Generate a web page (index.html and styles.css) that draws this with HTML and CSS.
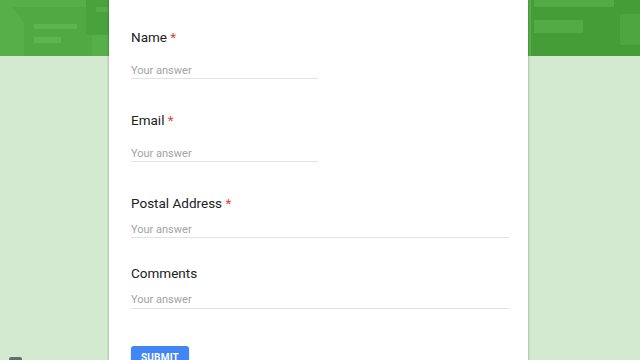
FILE: index.html
```html
<!DOCTYPE html>
<html lang="en">
<head>
	<meta charset="UTF-8">
	<title>Contact form</title>
	<link rel="stylesheet" href="styles.css">
</head>
<body>
	<div class="header">
		<div class="deco deco-slab"></div>
		<div class="deco deco-bar1"></div>
		<div class="deco deco-bar2"></div>
		<div class="deco deco-box"></div>
		<div class="deco deco-bar3"></div>
		<div class="deco deco-right"></div>
		<div class="deco deco-bar4"></div>
		<div class="deco deco-bar5"></div>
		<div class="deco deco-box2"></div>
	</div>
	<div class="card">
		<div class="q">
			<div class="q-title">Name <span class="req">*</span></div>
			<div class="answer short">Your answer</div>
		</div>
		<div class="q">
			<div class="q-title">Email <span class="req">*</span></div>
			<div class="answer short">Your answer</div>
		</div>
		<div class="q q-long">
			<div class="q-title">Postal Address <span class="req">*</span></div>
			<div class="answer">Your answer</div>
		</div>
		<div class="q q-long q-last">
			<div class="q-title">Comments</div>
			<div class="answer tall">Your answer</div>
		</div>
		<div class="actions">
			<span class="submit">SUBMIT</span>
		</div>
	</div>
	<div class="corner"></div>
</body>
</html>
```
FILE: styles.css
```css
*{
	margin: 0;
	padding: 0;
	box-sizing: border-box;
}
html,body{
	height: 100%;
	overflow: hidden;
}
body{
	background-color: #d3ead0;
	font-family: Roboto, "Liberation Sans", sans-serif;
	color: #202124;
}
.header{
	height: 56px;
	background-color: #57af4a;
	position: relative;
	overflow: hidden;
}
.deco{
	position: absolute;
}
.deco-slab{
	left: 12px;
	top: 7px;
	width: 80px;
	height: 49px;
	background-color: #51a944;
	clip-path: polygon(0 0, 100% 0, 100% 100%, 12px 100%, 12px 16px);
}
.deco-bar1{
	left: 34px;
	top: 24px;
	width: 43px;
	height: 5px;
	background-color: #5db450;
}
.deco-bar2{
	left: 34px;
	top: 37px;
	width: 27px;
	height: 6px;
	background-color: #5db450;
}
.deco-box{
	left: 86px;
	top: -4px;
	width: 40px;
	height: 39px;
	border-radius: 3px;
	background-color: #4aa23d;
}
.deco-bar3{
	left: 96px;
	top: 7px;
	width: 20px;
	height: 5px;
	background-color: #55ad48;
}
.deco-right{
	left: 531px;
	top: 0;
	width: 109px;
	height: 56px;
	background-color: #449d37;
}
.deco-bar4{
	left: 534px;
	top: 0;
	width: 80px;
	height: 7px;
	background-color: #53ab46;
}
.deco-bar5{
	left: 534px;
	top: 20px;
	width: 49px;
	height: 13px;
	background-color: #53ab46;
}
.deco-box2{
	left: 620px;
	top: 14px;
	width: 30px;
	height: 31px;
	border-radius: 2px;
	background-color: #4ea641;
}
.card{
	position: relative;
	margin: -56px 0 0 109px;
	width: 419px;
	min-height: 420px;
	background-color: #fff;
	box-shadow: 0 0 2px rgba(0,0,0,.25), 0 1px 3px rgba(0,0,0,.15);
	padding: 27px 19px 0 22px;
}
.q{
	margin-bottom: 31px;
}
.q-title{
	font-size: 13.5px;
	line-height: 20px;
}
.req{
	color: #db4437;
}
.answer{
	margin-top: 14px;
	padding-top: 2px;
	font-size: 11px;
	line-height: 15px;
	color: #a3a3a3;
	border-bottom: 1px solid #e3e3e3;
}
.answer.short{
	width: 187px;
}
.q-long .answer{
	margin-top: 7px;
}
.answer.tall{
	height: 19px;
}
.q-long{
	margin-bottom: 25px;
}
.q-last{
	margin-bottom: 37px;
}
.actions{
	display: flex;
}
.submit{
	display: inline-block;
	width: 58px;
	padding: 5px 0;
	line-height: 14px;
	text-align: center;
	font-size: 10px;
	font-weight: bold;
	letter-spacing: .2px;
	color: #fff;
	background-color: #4285f4;
	border-radius: 3px;
	box-shadow: 0 1px 2px rgba(0,0,0,.2);
}
.corner{
	position: fixed;
	left: 9px;
	top: 357px;
	width: 13px;
	height: 13px;
	background-color: #666d66;
	border-radius: 2px;
}
```
